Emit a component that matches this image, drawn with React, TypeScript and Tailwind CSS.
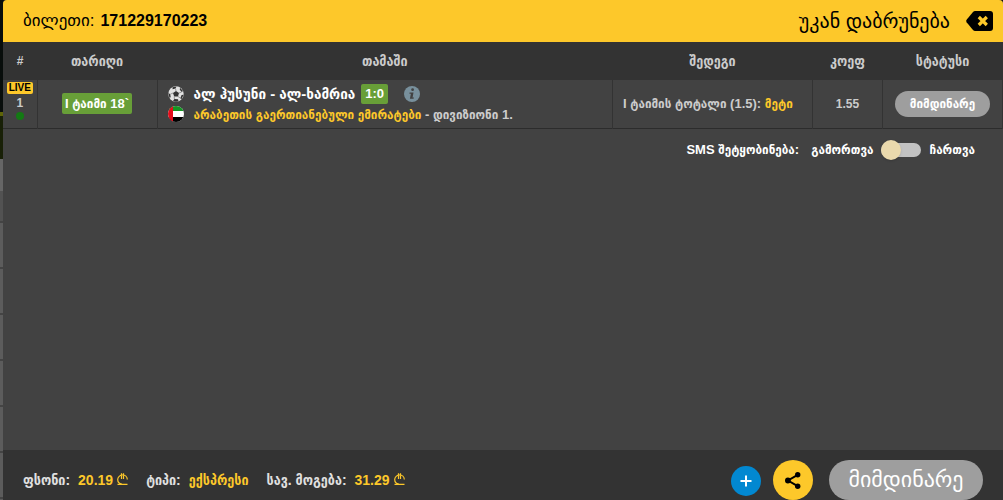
import { useState } from "react";

type Bet = {
  id: number;
  time: string;
  teams: string;
  score: string;
  country: string;
  league: string;
  market: string;
  pick: string;
  odds: string;
  status: string;
};

const bets: Bet[] = [
  {
    id: 1,
    time: "I ტაიმი 18`",
    teams: "ალ ჰუსუნი - ალ-ხამრია",
    score: "1:0",
    country: "არაბეთის გაერთიანებული ემირატები",
    league: "დივიზიონი 1.",
    market: "I ტაიმის ტოტალი (1.5):",
    pick: "მეტი",
    odds: "1.55",
    status: "მიმდინარე",
  },
];

const summary = [
  { label: "ფსონი:", value: "20.19", currency: true },
  { label: "ტიპი:", value: "ექსპრესი", currency: false },
  { label: "სავ. მოგება:", value: "31.29", currency: true },
];

const BackIcon = () => (
  <svg width="27" height="20" viewBox="0 0 27 20" aria-hidden="true">
    <path d="M9 0H24Q27 0 27 3V17Q27 20 24 20H9Q8 20 7 19L0.6 11.2Q-0.2 10 0.6 8.8L7 1Q8 0 9 0Z" fill="#000" />
    <path d="M12.8 6L20.8 14M20.8 6L12.8 14" stroke="#fdc82a" strokeWidth="3.2" />
  </svg>
);

const BallIcon = () => (
  <svg width="16" height="16" viewBox="0 0 16 16" aria-hidden="true">
    <circle cx="8" cy="8" r="7.7" fill="#e2e2e2" />
    <path d="M8 5L11 7L10 10.5H6.2L5 7Z" fill="#333" />
    <path d="M4.5 1.2L8.5 0.5L7.5 2.6L4.6 3.3ZM12 1.7L15 5L13.7 6L11.8 3.7ZM0.4 7L2.3 8.2L2.7 11.2L1.4 11.7ZM15.6 8.7L13.2 13.8L12.4 12L13.6 9ZM5 15L6.4 13L10 13.3L10.5 15.2L8 15.7Z" fill="#333" />
    <path d="M8 5L7.5 2.6M11 7L13.7 6M10 10.5L12.4 12M6.2 10.5L6.4 13M5 7L2.3 8.2" stroke="#777" strokeWidth="0.7" />
  </svg>
);

const FlagIcon = () => (
  <svg width="16" height="16" viewBox="0 0 16 16" aria-hidden="true">
    <clipPath id="flag-round">
      <circle cx="8" cy="8" r="8" />
    </clipPath>
    <g clipPath="url(#flag-round)">
      <path fill="#fff" d="M0 0h16v16H0z" />
      <path fill="#159524" d="M0 0h16v5H0z" />
      <path fill="#000" d="M0 11h16v5H0z" />
      <path fill="#e30d1b" d="M0 0h5v16H0z" />
    </g>
  </svg>
);

const InfoIcon = () => (
  <svg width="16" height="16" viewBox="0 0 16 16" aria-hidden="true">
    <circle cx="8" cy="8" r="8" fill="#78909c" />
    <circle cx="8.6" cy="3.7" r="1.4" fill="#424242" />
    <path d="M5.6 6.4H9.5L8.6 11.4H10L9.5 12.8H5.9L6.9 7.8H5.4Z" fill="#424242" />
  </svg>
);

const ShareIcon = () => (
  <svg width="16" height="17" viewBox="0 0 16 17" aria-hidden="true">
    <path d="M12.7 2.8L3 8.5L12.7 14.2" fill="none" stroke="#000" strokeWidth="2" />
    <circle cx="12.7" cy="2.8" r="2.7" />
    <circle cx="2.9" cy="8.5" r="2.9" />
    <circle cx="12.7" cy="14.2" r="2.7" />
  </svg>
);

const LariIcon = () => (
  <svg width="11" height="12" viewBox="0 0 11 12" role="img" aria-label="ლარი" className="mb-0.5">
    <path
      d="M10.3 6.5C10.3 3.8 8 2 5.5 2S0.7 4 0.7 6.6S2.8 10.8 5 11M4.5 0.3V6M6.5 0.3V6M0.5 11.3H10.5"
      fill="none"
      stroke="#fdc82a"
      strokeWidth="1.2"
    />
  </svg>
);

// Sliver of the dimmed page that stays visible behind the ticket
const Backdrop = () => (
  <div className="flex w-[3px] shrink-0 flex-col bg-[#5c5c5c]" aria-hidden="true">
    <div className="h-28 bg-[#080d0b]" />
    <div className="h-1 bg-[#5e6407]" />
    <div className="h-[43px] bg-[#182007]" />
    <div className="h-8 bg-[#666666]" />
    <div className="h-8 border-b-2 border-[#444444] bg-[#525252]" />
    {[1, 2, 3, 4, 5, 6].map((row) => (
      <div key={row} className="h-[46px] border-b-2 border-[#444444]" />
    ))}
  </div>
);

export default function App() {
  const [sms, setSms] = useState(false);

  return (
    <div className="flex min-h-screen bg-[#111111] font-['Liberation_Sans','DejaVu_Sans_Condensed','DejaVu_Sans',sans-serif] text-[#cccccc]">
      <Backdrop />
      <div className="flex min-w-0 flex-1 flex-col overflow-hidden rounded-t-sm bg-[#424242]">
        {/* Header */}
        <header className="flex h-[42px] items-center justify-between bg-[#fdc82a] pr-2.5 pl-5 font-['Liberation_Sans','DejaVu_Sans',sans-serif] text-black">
          <h1 className="flex items-baseline gap-1.5 text-base">
            <span className="text-[17px]">ბილეთი:</span>
            <span className="font-bold">171229170223</span>
          </h1>
          <button className="flex items-center gap-4 text-xl">
            უკან დაბრუნება
            <BackIcon />
          </button>
        </header>

        {/* Bets */}
        <main className="flex-1">
          <table className="w-full table-fixed border-collapse text-[13px] font-bold">
            <colgroup>
              <col className="w-[34px]" />
              <col className="w-[120px]" />
              <col />
              <col className="w-[200px]" />
              <col className="w-[70px]" />
              <col className="w-[120px]" />
            </colgroup>
            <thead className="bg-[#333333] text-sm">
              <tr className="h-[38px]">
                <th className="text-xs">#</th>
                <th>თარიღი</th>
                <th>თამაში</th>
                <th>შედეგი</th>
                <th>კოეფ</th>
                <th>სტატუსი</th>
              </tr>
            </thead>
            <tbody>
              {bets.map((bet) => (
                <tr key={bet.id} className="h-12 border-b border-[#2c2c2c] text-center">
                  <td className="border-r border-[#333333] pt-0.5 align-top text-xs">
                    <div className="flex flex-col items-center">
                      <span className="rounded-xs bg-[#fdc82a] px-0.5 text-[10px] leading-3 text-black">LIVE</span>
                      <span className="leading-[18px]">{bet.id}</span>
                      <span className="size-2 rounded-full bg-[#137a13]" />
                    </div>
                  </td>
                  <td className="border-r border-[#333333]">
                    <span className="inline-block rounded-xs bg-[#689f38] px-[3px] leading-[21px] text-white">{bet.time}</span>
                  </td>
                  <td className="border-r border-[#333333] pt-px pl-2.5 text-left">
                    <div className="flex h-5 items-center">
                      <BallIcon />
                      <span className="ml-2.5 text-[15px] leading-5 text-white">{bet.teams}</span>
                      <span className="ml-1.5 rounded-xs bg-[#689f38] px-1 leading-5 text-white">{bet.score}</span>
                      <button className="ml-4" aria-label="info">
                        <InfoIcon />
                      </button>
                    </div>
                    <div className="flex h-5 items-center gap-2.5">
                      <FlagIcon />
                      <span>
                        <span className="text-[#fdc82a]">{bet.country}</span> - {bet.league}
                      </span>
                    </div>
                  </td>
                  <td className="border-r border-[#333333] pl-2.5 text-left whitespace-nowrap">
                    {bet.market} <span className="text-[#fdc82a]">{bet.pick}</span>
                  </td>
                  <td className="border-r border-[#333333] text-xs">{bet.odds}</td>
                  <td className="border-r border-[#333333]">
                    <span className="inline-block w-[95px] rounded-full bg-[#9e9e9e] leading-[26px] text-white">{bet.status}</span>
                  </td>
                </tr>
              ))}
            </tbody>
          </table>

          {/* SMS notification */}
          <div className="flex h-[42px] items-center justify-end pr-7 text-[13px] font-bold text-white">
            <span className="mr-3">SMS შეტყობინება:</span>
            <label className="flex items-center gap-2">
              გამორთვა
              <span className="relative flex h-5 w-10 items-center">
                <input
                  type="checkbox"
                  role="switch"
                  checked={sms}
                  onChange={(e) => setSms(e.target.checked)}
                  className="peer h-3.5 w-full appearance-none rounded-full bg-[#c2c2c2]"
                />
                <span className="pointer-events-none absolute left-0 size-5 rounded-full bg-[#ead9ac] shadow peer-checked:left-5" />
              </span>
              ჩართვა
            </label>
          </div>
        </main>

        {/* Footer */}
        <footer className="flex h-[50px] items-end justify-between bg-[#333333] pr-5 pl-5">
          <dl className="flex gap-[18px] pb-3 text-sm leading-4 font-bold">
            {summary.map((item) => (
              <div key={item.label} className="flex items-center gap-2">
                <dt className="text-[#e0e0e0]">{item.label}</dt>
                <dd className="flex items-center gap-1 text-[#fdc82a]">
                  {item.value}
                  {item.currency && <LariIcon />}
                </dd>
              </div>
            ))}
          </dl>
          <div className="flex items-end">
            <button aria-label="add" className="mr-3 mb-1 flex size-[30px] items-center justify-center rounded-full bg-[#0288d1]">
              <svg width="12" height="12" viewBox="0 0 12 12" aria-hidden="true">
                <path d="M6 0.5V11.5M0.5 6H11.5" stroke="#fff" strokeWidth="2" />
              </svg>
            </button>
            <button aria-label="share" className="mr-4 flex size-10 items-center justify-center rounded-full bg-[#fdc82a]">
              <ShareIcon />
            </button>
            <span className="h-10 w-[154px] rounded-full bg-[#9e9e9e] text-center font-['Liberation_Sans','DejaVu_Sans',sans-serif] text-[22px] leading-10 text-white">
              მიმდინარე
            </span>
          </div>
        </footer>
      </div>
    </div>
  );
}
